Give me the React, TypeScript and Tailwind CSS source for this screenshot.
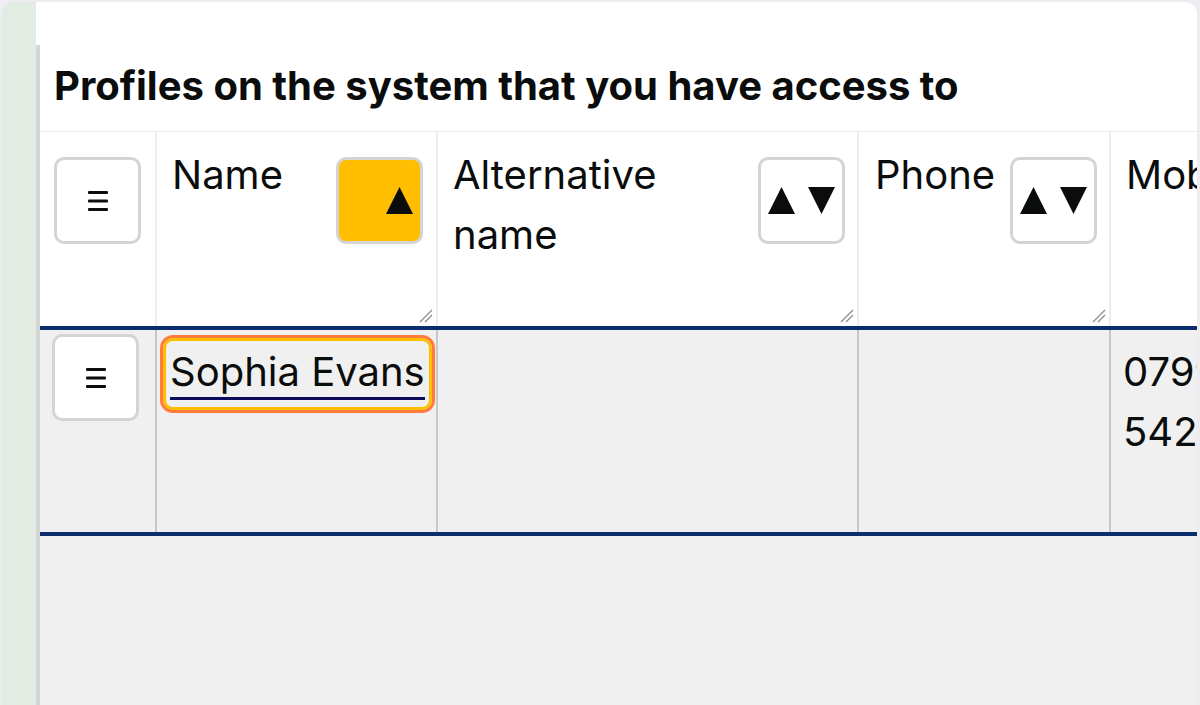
import React from "react";

function MenuIcon() {
  return (
    <svg width="20" height="22" viewBox="0 0 20 22" aria-hidden="true">
      <rect x="0" y="1" width="20" height="3" rx="1" fill="#0b0c0c" />
      <rect x="0" y="9.5" width="20" height="3" rx="1" fill="#0b0c0c" />
      <rect x="0" y="18" width="20" height="3" rx="1" fill="#0b0c0c" />
    </svg>
  );
}

function Up() {
  return (
    <svg width="27" height="27" viewBox="0 0 27 27" aria-hidden="true">
      <polygon points="13.5,0 27,27 0,27" fill="#0b0c0c" />
    </svg>
  );
}

function Down() {
  return (
    <svg width="27" height="27" viewBox="0 0 27 27" aria-hidden="true">
      <polygon points="0,0 27,0 13.5,27" fill="#0b0c0c" />
    </svg>
  );
}

function Grip() {
  return (
    <svg
      width="14"
      height="14"
      viewBox="0 0 14 14"
      className="absolute right-[3px] bottom-[3px]"
      aria-hidden="true"
    >
      <line x1="1" y1="13" x2="13" y2="1" stroke="#8c8c8c" strokeWidth="1.3" />
      <line x1="6" y1="13" x2="13" y2="6" stroke="#8c8c8c" strokeWidth="1.3" />
    </svg>
  );
}

function MenuButton({ className }: { className?: string }) {
  return (
    <button
      className={
        "w-[87px] h-[87px] shrink-0 rounded-[10px] border-[3px] border-[#d4d4d4] bg-white flex items-center justify-center " +
        (className ?? "")
      }
    >
      <MenuIcon />
    </button>
  );
}

function SortButton({ active }: { active?: boolean }) {
  if (active) {
    return (
      <button className="w-[87px] h-[87px] shrink-0 mt-[12px] rounded-[10px] border-[3px] border-[#d4d4d4] bg-[#ffbf00] flex items-center justify-end pr-[7px]">
        <Up />
      </button>
    );
  }
  return (
    <button className="w-[87px] h-[87px] shrink-0 mt-[12px] rounded-[10px] border-[3px] border-[#d4d4d4] bg-white flex items-center justify-center gap-[13px]">
      <Up />
      <Down />
    </button>
  );
}

function HeadCell({
  label,
  width,
  active,
}: {
  label: string;
  width: string;
  active?: boolean;
}) {
  return (
    <div
      className={
        "relative shrink-0 h-full border-r-2 border-[#eeeeee] flex items-start justify-between gap-2 pt-[13px] pl-[15px] pr-[13px] " +
        width
      }
    >
      <span className="leading-[60px]">{label}</span>
      <SortButton active={active} />
      <Grip />
    </div>
  );
}

export default function App() {
  return (
    <div className="w-[1200px] h-[705px] bg-[#efeff3] font-['Inter',sans-serif] text-[#0b0c0c]">
      <div className="h-full rounded-t-[14px] border-l-2 border-t-2 border-r-[3px] border-[#ececf1] overflow-hidden flex">
        <div className="w-[34px] shrink-0 bg-[#e3ece2]" />
        <div className="flex-1 min-w-0 flex flex-col bg-white">
          <div className="h-[43px] shrink-0" />
          <div className="flex-1 min-w-0 flex flex-col border-l-4 border-[#d6d6d6]">
            <h1 className="pt-[12px] pb-[16px] pl-[14px] text-[40px] leading-[58px] font-bold whitespace-nowrap">
              Profiles on the system that you have access to
            </h1>

            <div className="flex h-[199px] shrink-0 border-t border-[#eeeeee] border-b-4 border-b-[#0c2d6b] bg-white text-[40px]">
              <div className="w-[117px] shrink-0 h-full border-r-2 border-[#eeeeee] pl-[14px] pt-[25px]">
                <MenuButton />
              </div>
              <HeadCell label="Name" width="w-[281px]" active />
              <div className="relative w-[421px] shrink-0 h-full border-r-2 border-[#eeeeee] flex items-start justify-between pt-[13px] pl-[15px] pr-[12px]">
                <span className="leading-[60px]">
                  Alternative
                  <br />
                  name
                </span>
                <SortButton />
                <Grip />
              </div>
              <div className="relative w-[252px] shrink-0 h-full border-r-2 border-[#eeeeee] flex items-start justify-between pt-[13px] pl-[16px] pr-[12px]">
                <span className="leading-[60px]">Phone</span>
                <SortButton />
                <Grip />
              </div>
              <div className="relative w-[240px] shrink-0 h-full flex items-start gap-4 pt-[13px] pl-[15px]">
                <span className="leading-[60px]">Mobile</span>
                <SortButton />
              </div>
            </div>

            <div className="flex h-[206px] shrink-0 border-b-4 border-[#0c2d6b] bg-[#f0f0f0] text-[40px]">
              <div className="w-[117px] shrink-0 h-full border-r-2 border-[#c8c8c8] pl-[12px] pt-[4px]">
                <MenuButton />
              </div>
              <div className="w-[281px] shrink-0 h-full border-r-2 border-[#c8c8c8] flex items-start pl-[6px] pt-[8px]">
                <a
                  href="#"
                  className="inline-block rounded-[10px] border-[3px] border-[#ffbf00] shadow-[0_0_0_3px_#ff7a3c] px-[4px] pt-[6px] pb-[7px]"
                >
                  <span className="block leading-[50px] border-b-[3px] border-[#0b0c5c] whitespace-nowrap">
                    Sophia Evans
                  </span>
                </a>
              </div>
              <div className="w-[421px] shrink-0 h-full border-r-2 border-[#c8c8c8]" />
              <div className="w-[252px] shrink-0 h-full border-r-2 border-[#c8c8c8]" />
              <div className="w-[200px] shrink-0 h-full pl-[12px] pt-[12px] leading-[60px]">
                07991 542318
              </div>
            </div>

            <div className="flex-1 bg-[#f0f0f0]" />
          </div>
        </div>
      </div>
    </div>
  );
}
